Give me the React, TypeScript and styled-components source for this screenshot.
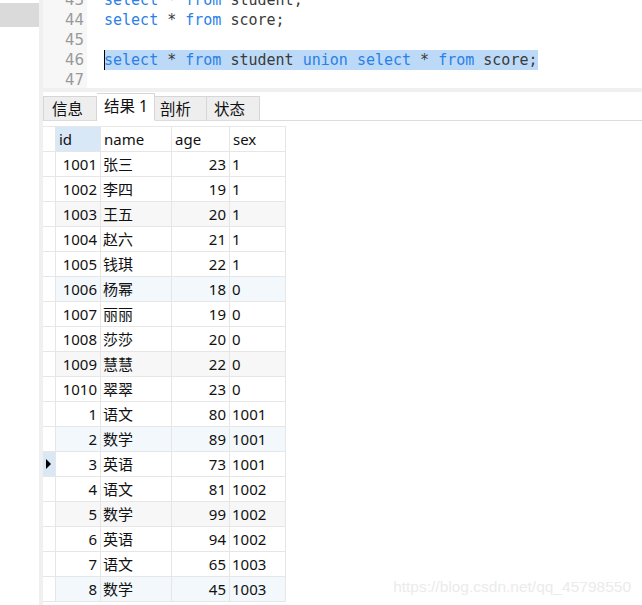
import { FC } from "react";
import styled, { createGlobalStyle } from "styled-components";

const GlobalStyle = createGlobalStyle`
  html, body {
    margin: 0;
    padding: 0;
    background: #ffffff;
  }
  body {
    width: 642px;
    height: 605px;
    overflow: hidden;
  }
`;

type Token = { text: string; kind: "kw" | "plain" };

const kw = (text: string): Token => ({ text, kind: "kw" });
const pl = (text: string): Token => ({ text, kind: "plain" });

const codeLines: { no: number; tokens: Token[]; selected?: boolean }[] = [
  { no: 43, tokens: [kw("select"), pl(" * "), kw("from"), pl(" student;")] },
  { no: 44, tokens: [kw("select"), pl(" * "), kw("from"), pl(" score;")] },
  { no: 45, tokens: [] },
  {
    no: 46,
    selected: true,
    tokens: [
      kw("select"),
      pl(" * "),
      kw("from"),
      pl(" student "),
      kw("union"),
      pl(" "),
      kw("select"),
      pl(" * "),
      kw("from"),
      pl(" score;"),
    ],
  },
  { no: 47, tokens: [] },
];

const tabs: { label: string; width: number; pad: number; active?: boolean }[] = [
  { label: "信息", width: 54, pad: 8 },
  { label: "结果 1", width: 58, pad: 7, active: true },
  { label: "剖析", width: 52, pad: 5 },
  { label: "状态", width: 53, pad: 7 },
];

const rows: [number, string, number, number][] = [
  [1001, "张三", 23, 1],
  [1002, "李四", 19, 1],
  [1003, "王五", 20, 1],
  [1004, "赵六", 21, 1],
  [1005, "钱琪", 22, 1],
  [1006, "杨幂", 18, 0],
  [1007, "丽丽", 19, 0],
  [1008, "莎莎", 20, 0],
  [1009, "慧慧", 22, 0],
  [1010, "翠翠", 23, 0],
  [1, "语文", 80, 1001],
  [2, "数学", 89, 1001],
  [3, "英语", 73, 1001],
  [4, "语文", 81, 1002],
  [5, "数学", 99, 1002],
  [6, "英语", 94, 1002],
  [7, "语文", 65, 1003],
  [8, "数学", 45, 1003],
];

const CURRENT_ROW = 12;

// every third row gets a tint, alternating grey / pale blue
const rowTint = (i: number): string => {
  if (i % 3 !== 2) return "#ffffff";
  return Math.floor(i / 3) % 2 === 0 ? "#f7f7f7" : "#f3f8fc";
};

const App: FC = () => {
  return (
    <>
      <GlobalStyle />
      <Window>
        <SidePane>
          <SideItem />
        </SidePane>
        <MainPane>
          <Editor>
            <Gutter>
              {codeLines.map((l) => (
                <LineNo key={l.no}>{l.no}</LineNo>
              ))}
            </Gutter>
            <Code>
              {codeLines.map((l) => (
                <CodeLine key={l.no}>
                  {l.selected && <Caret />}
                  <LineText $selected={l.selected}>
                    {l.tokens.map((t, i) =>
                      t.kind === "kw" ? (
                        <Keyword key={i}>{t.text}</Keyword>
                      ) : (
                        <span key={i}>{t.text}</span>
                      )
                    )}
                  </LineText>
                </CodeLine>
              ))}
            </Code>
          </Editor>
          <Splitter />
          <TabBar>
            {tabs.map((t) => (
              <Tab key={t.label} $active={t.active} $width={t.width} $pad={t.pad}>
                {t.label}
              </Tab>
            ))}
          </TabBar>
          <GridArea>
            <Grid>
              <IndicatorCell />
              <HeadCell $current>id</HeadCell>
              <HeadCell>name</HeadCell>
              <HeadCell>age</HeadCell>
              <HeadCell>sex</HeadCell>
              {rows.map(([id, name, age, sex], i) => (
                <GridRow key={i} $bg={rowTint(i)}>
                  <IndicatorCell $current={i === CURRENT_ROW}>
                    {i === CURRENT_ROW && <Arrow />}
                  </IndicatorCell>
                  <Cell $align="right">{id}</Cell>
                  <Cell>{name}</Cell>
                  <Cell $align="right">{age}</Cell>
                  <Cell>{sex}</Cell>
                </GridRow>
              ))}
            </Grid>
          </GridArea>
        </MainPane>
        <Watermark>https://blog.csdn.net/qq_45798550</Watermark>
      </Window>
    </>
  );
};

export default App;

const Window = styled.div`
  position: relative;
  display: flex;
  width: 642px;
  height: 605px;
  overflow: hidden;
  background: #fff;
  font-family: "Noto Sans", "Noto Sans CJK SC", sans-serif;
  color: #111;
`;

const SidePane = styled.div`
  width: 39px;
  flex-shrink: 0;
  padding-top: 3px;
  background: #fff;
`;

const SideItem = styled.div`
  height: 24px;
  background: #dadada;
`;

const MainPane = styled.div`
  flex: 1;
  display: flex;
  flex-direction: column;
  border-left: 4px solid #f0f0f0;
  min-width: 0;
`;

const Editor = styled.div`
  display: flex;
  height: 88px;
  overflow: hidden;
  flex-shrink: 0;
`;

const Gutter = styled.div`
  width: 44px;
  background: #f7f7f7;
  margin-top: -10px;
  flex-shrink: 0;
`;

const LineNo = styled.div`
  height: 20px;
  line-height: 20px;
  padding-right: 3px;
  text-align: right;
  font-family: "DejaVu Sans", sans-serif;
  font-size: 15px;
  color: #9a9a9a;
`;

const Code = styled.div`
  flex: 1;
  padding-left: 17px;
  margin-top: -10px;
`;

const CodeLine = styled.div`
  position: relative;
  height: 20px;
  line-height: 20px;
  font-family: "DejaVu Sans Mono", monospace;
  font-size: 15px;
  white-space: pre;
  color: #3a3a3a;
`;

const LineText = styled.span<{ $selected?: boolean }>`
  display: inline-block;
  height: 20px;
  background: ${(p) => (p.$selected ? "#bcdaf7" : "transparent")};
`;

const Keyword = styled.span`
  color: #2b7fe6;
`;

const Caret = styled.span`
  position: absolute;
  left: 0;
  top: 0;
  width: 1px;
  height: 20px;
  background: #000;
`;

const Splitter = styled.div`
  height: 4px;
  background: #f0f0f0;
  flex-shrink: 0;
`;

const TabBar = styled.div`
  display: flex;
  align-items: flex-end;
  height: 28px;
  border-bottom: 1px solid #dcdcdc;
  flex-shrink: 0;
`;

const Tab = styled.div<{ $active?: boolean; $width: number; $pad: number }>`
  box-sizing: border-box;
  width: ${(p) => p.$width}px;
  height: ${(p) => (p.$active ? 28 : 25)}px;
  margin-bottom: -1px;
  padding-left: ${(p) => p.$pad}px;
  line-height: 24px;
  font-size: 15.5px;
  background: ${(p) => (p.$active ? "#ffffff" : "#eeeeee")};
  border: 1px solid #d6d6d6;
  border-bottom-color: ${(p) => (p.$active ? "#ffffff" : "#dcdcdc")};
  color: #111;
  & + & {
    border-left: none;
  }
`;

const GridArea = styled.div`
  flex: 1;
  padding-top: 5px;
`;

const Grid = styled.div`
  display: grid;
  grid-template-columns: 13px 45px 71px 58px 56px;
  grid-auto-rows: 25px;
  width: max-content;
  border-top: 1px solid #e8e8e8;
`;

const GridRow = styled.div<{ $bg: string }>`
  display: contents;
  & > div {
    background: ${(p) => p.$bg};
  }
`;

const BaseCell = styled.div`
  box-sizing: border-box;
  border-right: 1px solid #e6e6e6;
  border-bottom: 1px solid #e6e6e6;
  font-size: 15px;
  line-height: 24px;
  white-space: nowrap;
  overflow: hidden;
`;

const IndicatorCell = styled(BaseCell)<{ $current?: boolean }>`
  display: flex;
  align-items: center;
  padding-left: 3px;
  && {
    background: ${(p) => (p.$current ? "#dae8f6" : "#ffffff")};
  }
`;

const HeadCell = styled(BaseCell)<{ $current?: boolean }>`
  padding-left: 3px;
  background: ${(p) => (p.$current ? "#d9e8f7" : "#ffffff")};
`;

const Cell = styled(BaseCell)<{ $align?: "left" | "right" }>`
  text-align: ${(p) => p.$align ?? "left"};
  padding: 0 3px 0 2px;
`;

const Arrow = styled.span`
  width: 0;
  height: 0;
  border-top: 5px solid transparent;
  border-bottom: 5px solid transparent;
  border-left: 5px solid #000;
`;

const Watermark = styled.div`
  position: absolute;
  right: 11px;
  bottom: 9px;
  font-family: "Liberation Sans", Arial, sans-serif;
  font-size: 15.5px;
  color: #ebebeb;
  pointer-events: none;
`;
